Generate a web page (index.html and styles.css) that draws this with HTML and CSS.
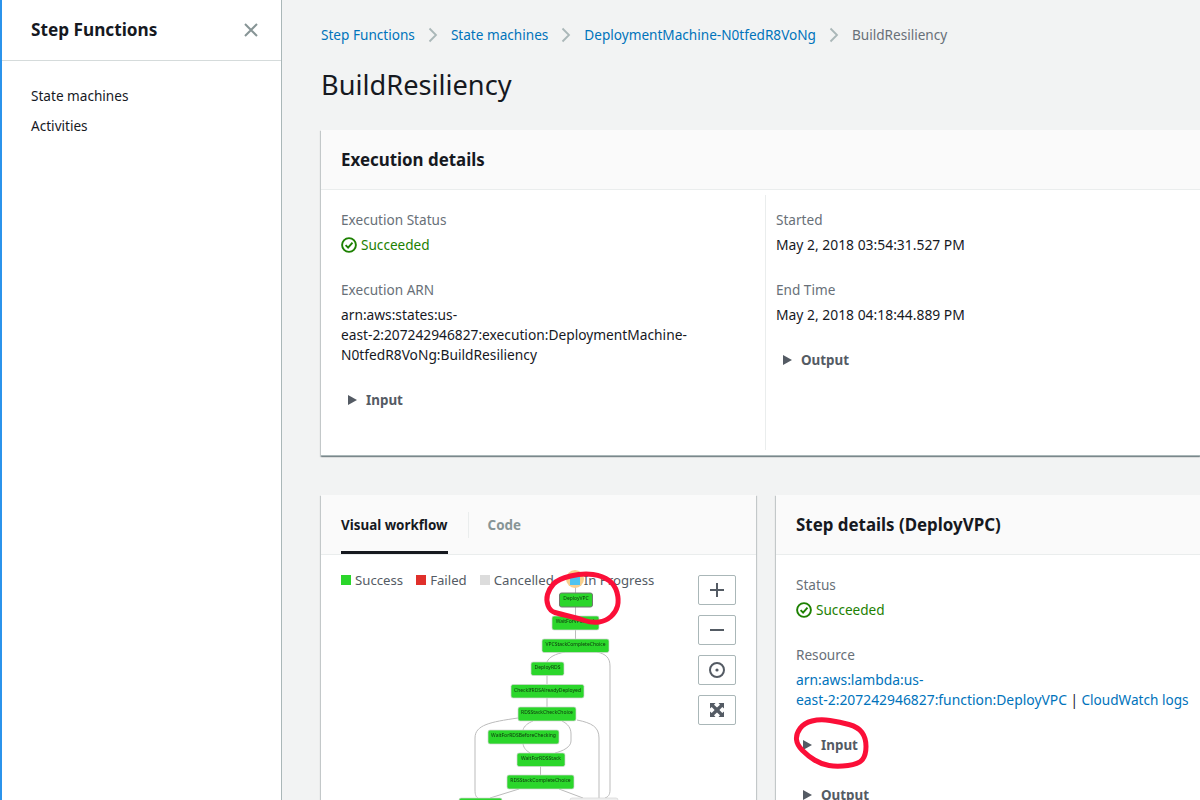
FILE: index.html
```html
<!DOCTYPE html>
<html lang="en">
<head>
    <meta charset="UTF-8">
    <title>BuildResiliency</title>
    <link rel="stylesheet" href="styles.css">
</head>
<body>
    <div class="page">

        <!-- SIDEBAR -->
        <nav class="sidebar">
            <div class="sidebarHead">
                <span class="sidebarTitle">Step Functions</span>
                <svg class="closeIcon" width="14" height="14" viewBox="0 0 14 14">
                    <path d="M1 1 L13 13 M13 1 L1 13"/>
                </svg>
            </div>
            <ul class="sideLinks">
                <li>State machines</li>
                <li>Activities</li>
            </ul>
        </nav>

        <!-- MAIN -->
        <main class="main">
            <div class="crumbs">
                <a class="crumbLink">Step Functions</a>
                <svg class="chevron" width="10" height="16" viewBox="0 0 10 16"><path d="M1.5 1.5 L8 8 L1.5 14.5"/></svg>
                <a class="crumbLink">State machines</a>
                <svg class="chevron" width="10" height="16" viewBox="0 0 10 16"><path d="M1.5 1.5 L8 8 L1.5 14.5"/></svg>
                <a class="crumbLink">DeploymentMachine-N0tfedR8VoNg</a>
                <svg class="chevron" width="10" height="16" viewBox="0 0 10 16"><path d="M1.5 1.5 L8 8 L1.5 14.5"/></svg>
                <span class="crumbNow">BuildResiliency</span>
            </div>
            <h1 class="pageTitle">BuildResiliency</h1>

            <!-- execution details -->
            <section class="card execCard">
                <h2 class="cardHead">Execution details</h2>
                <div class="execCols">
                    <div class="execCol">
                        <div class="label">Execution Status</div>
                        <div class="value status">
                            <svg class="okIcon" width="16" height="16" viewBox="0 0 16 16"><circle cx="8" cy="8" r="6.9"/><path d="M4.6 8.2 L7.1 10.7 L11.5 5.6"/></svg>
                            Succeeded
                        </div>
                        <div class="label">Execution ARN</div>
                        <div class="value arn">arn:aws:states:us-<br>east-2:207242946827:execution:DeploymentMachine-<br>N0tfedR8VoNg:BuildResiliency</div>
                        <div class="toggle"><span class="arrow"></span>Input</div>
                    </div>
                    <div class="execCol rightCol">
                        <div class="label">Started</div>
                        <div class="value numeric">May 2, 2018 03:54:31.527 PM</div>
                        <div class="label">End Time</div>
                        <div class="value numeric">May 2, 2018 04:18:44.889 PM</div>
                        <div class="toggle"><span class="arrow"></span>Output</div>
                    </div>
                </div>
            </section>

            <div class="lowerRow">
                <!-- workflow -->
                <section class="card flowCard">
                    <div class="tabs">
                        <span class="tab tabOn">Visual workflow</span>
                        <span class="tabSep"></span>
                        <span class="tab">Code</span>
                    </div>
                    <div class="flowBody">
                        <svg class="flowGraph" width="435" height="245" viewBox="321 555 435 245">
                            <g class="edges">
                                <path d="M575.5 587V593M575.5 607V616M575.5 630V639"/>
                                <path d="M565 652C555 654 549 657 547 662"/>
                                <path d="M597 652C606 654 610 658 610 666V790C610 795 608 797 605 798"/>
                                <path d="M547 675V684M547 698V707"/>
                                <path d="M518 718C490 722 475 725 475 738V790C475 795 476 797 478 798"/>
                                <path d="M533 721C528 723 524 726 523 730"/>
                                <path d="M562 721C568 724 571 728 571 734V741C571 747 563 751 555 753"/>
                                <path d="M523 744C524 749 527 751 530 753"/>
                                <path d="M577 720C592 723 599 727 599 738V798"/>
                                <path d="M540.5 766V775"/>
                                <path d="M519 789L490 798M559 789L583 798"/>
                            </g>
                            <g class="nodes">
                                <rect class="nodeOn" x="559.5" y="593" width="33" height="14" rx="2"/>
                                <text x="576" y="600">DeployVPC</text>
                                <rect x="552" y="616" width="47" height="14" rx="2"/>
                                <text x="575.5" y="623">WaitForVPCStack</text>
                                <rect x="542" y="639" width="67" height="13.5" rx="2"/>
                                <text x="575.5" y="646">VPCStackCompleteChoice</text>
                                <rect x="531" y="662" width="33" height="13.5" rx="2"/>
                                <text x="547.5" y="669">DeployRDS</text>
                                <rect x="511" y="684.5" width="73" height="13.5" rx="2"/>
                                <text x="547.5" y="691.5">CheckIfRDSAlreadyDeployed</text>
                                <rect x="518" y="707" width="58" height="14" rx="2"/>
                                <text x="547" y="714">RDSStackCheckChoice</text>
                                <rect x="488" y="730" width="71" height="14" rx="2"/>
                                <text x="523.5" y="737">WaitForRDSBeforeChecking</text>
                                <rect x="517" y="753" width="48" height="13.5" rx="2"/>
                                <text x="541" y="760">WaitForRDSStack</text>
                                <rect x="507" y="775" width="67" height="14" rx="2"/>
                                <text x="540.5" y="782">RDSStackCompleteChoice</text>
                                <rect x="459" y="798" width="43" height="14" rx="2"/>
                                <rect class="nodeIdle" x="570" y="798" width="48" height="14" rx="2"/>
                            </g>
                        </svg>
                        <div class="legend">
                            <span class="legendItem"><i class="swatch swGreen"></i>Success</span>
                            <span class="legendItem"><i class="swatch swRed"></i>Failed</span>
                            <span class="legendItem"><i class="swatch swGray"></i>Cancelled</span>
                            <span class="legendItem legendLast"><i class="swatch swBlue"></i>In Progress</span>
                        </div>
                        <div class="zoomBtns">
                            <button class="zoomBtn"><svg width="16" height="16" viewBox="0 0 16 16"><path d="M8 1V15M1 8H15"/></svg></button>
                            <button class="zoomBtn"><svg width="16" height="16" viewBox="0 0 16 16"><path d="M1 8H15"/></svg></button>
                            <button class="zoomBtn"><svg width="16" height="16" viewBox="0 0 16 16"><circle cx="8" cy="8" r="7"/><circle class="solid" cx="8" cy="8" r="1.6"/></svg></button>
                            <button class="zoomBtn"><svg width="16" height="16" viewBox="0 0 16 16"><path class="solid" d="M1 1H6.5L5 2.7L8 5.6L11 2.7L9.5 1H15V6.5L13.3 5L10.4 8L13.3 11L15 9.5V15H9.5L11 13.3L8 10.4L5 13.3L6.5 15H1V9.5L2.7 11L5.6 8L2.7 5L1 6.5Z"/></svg></button>
                        </div>
                    </div>
                </section>

                <!-- step details -->
                <section class="card stepCard">
                    <h2 class="cardHead">Step details (DeployVPC)</h2>
                    <div class="stepBody">
                        <div class="label">Status</div>
                        <div class="value status">
                            <svg class="okIcon" width="16" height="16" viewBox="0 0 16 16"><circle cx="8" cy="8" r="6.9"/><path d="M4.6 8.2 L7.1 10.7 L11.5 5.6"/></svg>
                            Succeeded
                        </div>
                        <div class="label">Resource</div>
                        <div class="value resource"><a class="crumbLink numeric">arn:aws:lambda:us-<br>east-2:207242946827:function:DeployVPC</a> | <a class="crumbLink">CloudWatch logs</a></div>
                        <div class="toggle"><span class="arrow"></span>Input</div>
                        <div class="toggle"><span class="arrow"></span>Output</div>
                    </div>
                </section>
            </div>
        </main>
    </div>

    <!-- red marks drawn over the screenshot -->
    <svg class="marks" width="1200" height="800" viewBox="0 0 1200 800">
        <path d="M570.5 576Q583 573 593 574.5Q603 576 609 580.5Q615 585 617 592.5Q619 600 617.5 606Q616 612 611 616.5Q606 621 599 622Q592 623 584.5 620.5Q577 618 568.5 616Q560 614 555 612.5Q550 611 548 605.5Q546 600 547.5 594.5Q549 589 553.5 584Q558 579 570.5 576Z"/>
        <path d="M830 720.5Q840 722 849 724.5Q858 727 862 732.5Q866 738 866 746.5Q866 755 862.5 759.5Q859 764 848 765.5Q837 767 829 765.5Q821 764 814.5 760Q808 756 802.5 750.5Q797 745 796.5 739.5Q796 734 800 728.5Q804 723 812 721Q820 719 830 720.5Z"/>
    </svg>
</body>
</html>
```

FILE: styles.css
```css
html, body {
    margin: 0;
    padding: 0;
    height: 800px;
    overflow: hidden;
}

body {
    position: relative;
    background-color: #f2f3f3;
    color: #16191f;
    font-family: "Noto Sans", sans-serif;
    font-size: 13.6px;
    line-height: 20px;
}

.page {
    display: flex;
    height: 800px;
}

/* sidebar */
.sidebar {
    width: 279px;
    flex-shrink: 0;
    background-color: #fff;
    border-left: 2px solid #2b93eb;
    border-right: 1px solid #aab7b8;
}

.sidebarHead {
    display: flex;
    align-items: center;
    justify-content: space-between;
    height: 60px;
    padding: 0 23px 0 29px;
    border-bottom: 1px solid #d5dbdb;
}

.sidebarTitle {
    font-size: 17.2px;
    font-weight: 700;
}

.closeIcon path {
    fill: none;
    stroke: #879596;
    stroke-width: 2;
}

.sideLinks {
    list-style: none;
    margin: 0;
    padding: 20px 0 0 29px;
}

.sideLinks li {
    height: 30px;
    line-height: 30px;
    color: #16191f;
}

/* main */
.main {
    width: 879px;
    flex-shrink: 0;
    padding-left: 39px;
}

.crumbs {
    display: flex;
    align-items: center;
    height: 20px;
    padding-top: 25px;
    gap: 13px;
}

.crumbLink {
    color: #0073bb;
}

.crumbNow {
    color: #687078;
}

.chevron path {
    fill: none;
    stroke: #aab7b8;
    stroke-width: 1.8;
}

.pageTitle {
    margin: 20px 0 25px;
    font-size: 27.2px;
    line-height: 40px;
    font-weight: 400;
}

.card {
    background-color: #fff;
    box-shadow: 0 1px 1px 0 rgba(0, 28, 36, 0.3), 1px 1px 1px 0 rgba(0, 28, 36, 0.15), -1px 1px 1px 0 rgba(0, 28, 36, 0.15);
}

.cardHead {
    margin: 0;
    height: 59px;
    padding: 0 20px;
    line-height: 60px;
    font-size: 16.9px;
    font-weight: 700;
    background-color: #fafafa;
    border-bottom: 1px solid #eaeded;
    white-space: nowrap;
}

.execCard {
    height: 326px;
    border-bottom: 1px solid #aab7b8;
    box-sizing: border-box;
}

.execCols {
    display: flex;
    height: 255px;
    padding-top: 5px;
}

.execCol {
    width: 444px;
    box-sizing: border-box;
    padding: 15px 20px 0;
}

.rightCol {
    border-left: 1px solid #eaeded;
    width: 435px;
    padding-left: 10px;
}

.label {
    color: #687078;
}

.value {
    margin-top: 5px;
    margin-bottom: 25px;
}

/* the digits are wider in the original, so these lines run a bit larger */
.numeric {
    font-size: 13.88px;
}

.arn {
    font-size: 13.75px;
}

.resource {
    white-space: nowrap;
}

.status {
    display: flex;
    align-items: center;
    gap: 4px;
    color: #1d8102;
}

.okIcon {
    flex-shrink: 0;
}

.okIcon circle, .okIcon path {
    fill: none;
    stroke: #1d8102;
    stroke-width: 1.9;
}

.toggle {
    display: flex;
    align-items: center;
    margin-bottom: 30px;
    padding-left: 7px;
    color: #545b64;
    font-size: 13.4px;
    font-weight: 700;
}

.arrow {
    width: 0;
    height: 0;
    margin-right: 9px;
    border-left: 9px solid #545b64;
    border-top: 5px solid transparent;
    border-bottom: 5px solid transparent;
}

/* lower row */
.lowerRow {
    display: flex;
    gap: 20px;
    margin-top: 39px;
}

.flowCard {
    width: 435px;
    height: 400px;
}

.stepCard {
    width: 424px;
    height: 400px;
}

.tabs {
    display: flex;
    align-items: center;
    height: 59px;
    padding-left: 20px;
    background-color: #fafafa;
    border-bottom: 1px solid #eaeded;
}

.tab {
    height: 59px;
    line-height: 61px;
    box-sizing: border-box;
    font-size: 13.4px;
    font-weight: 700;
    color: #879596;
}

.tabOn {
    color: #16191f;
    border-bottom: 3px solid #16191f;
}

.tabSep {
    width: 1px;
    height: 26px;
    margin: 0 19px 0 20px;
    background-color: #eaeded;
}

.flowBody {
    position: relative;
    height: 340px;
}

.flowGraph {
    position: absolute;
    top: 0;
    left: 0;
    filter: blur(0.25px);
}

.edges path {
    fill: none;
    stroke: #bbb;
    stroke-width: 1;
}

.nodes rect {
    fill: #2bd62b;
    stroke: #d5d5d5;
    stroke-width: 0.7;
}

.nodes .nodeOn {
    stroke: #707a70;
    stroke-width: 1;
}

.nodes .nodeIdle {
    fill: #eee;
}

.nodes text {
    font-size: 5px;
    text-anchor: middle;
    fill: #0e340e;
    font-family: "Noto Sans", sans-serif;
}

.legend {
    position: relative;
    z-index: 0;
    display: flex;
    gap: 13px;
    padding: 15px 0 0 20px;
    color: #545b64;
    font-size: 13.2px;
}

.legendItem {
    display: flex;
    align-items: center;
    gap: 4px;
}

.legendLast {
    margin-left: 3px;
}

.swatch {
    position: relative;
    width: 10px;
    height: 10px;
}

.swGreen { background-color: #2bd62b; }
.swRed { background-color: #e0302b; }
.swGray { background-color: #dcdcdc; }
.swBlue { background-color: #4dc3f0; }

/* the orange halo behind the start node */
.swBlue::before {
    content: "";
    position: absolute;
    z-index: -1;
    top: -5px;
    left: -4px;
    width: 18px;
    height: 18px;
    border-radius: 50%;
    background-color: #f8cf8d;
}

.zoomBtns {
    position: absolute;
    top: 20px;
    left: 377px;
    display: flex;
    flex-direction: column;
    gap: 10px;
}

.zoomBtn {
    display: flex;
    align-items: center;
    justify-content: center;
    width: 38px;
    height: 30px;
    padding: 0;
    background-color: #fff;
    border: 1px solid #aab7b8;
    border-radius: 2px;
}

.zoomBtn path, .zoomBtn circle {
    fill: none;
    stroke: #545b64;
    stroke-width: 2;
}

.zoomBtn .solid {
    fill: #545b64;
    stroke: none;
}

.stepBody {
    padding: 20px;
}

/* red pen marks */
.marks {
    position: absolute;
    top: 0;
    left: 0;
    pointer-events: none;
}

.marks path {
    fill: none;
    stroke: #fb0f38;
    stroke-width: 5;
    stroke-linejoin: round;
}
```
